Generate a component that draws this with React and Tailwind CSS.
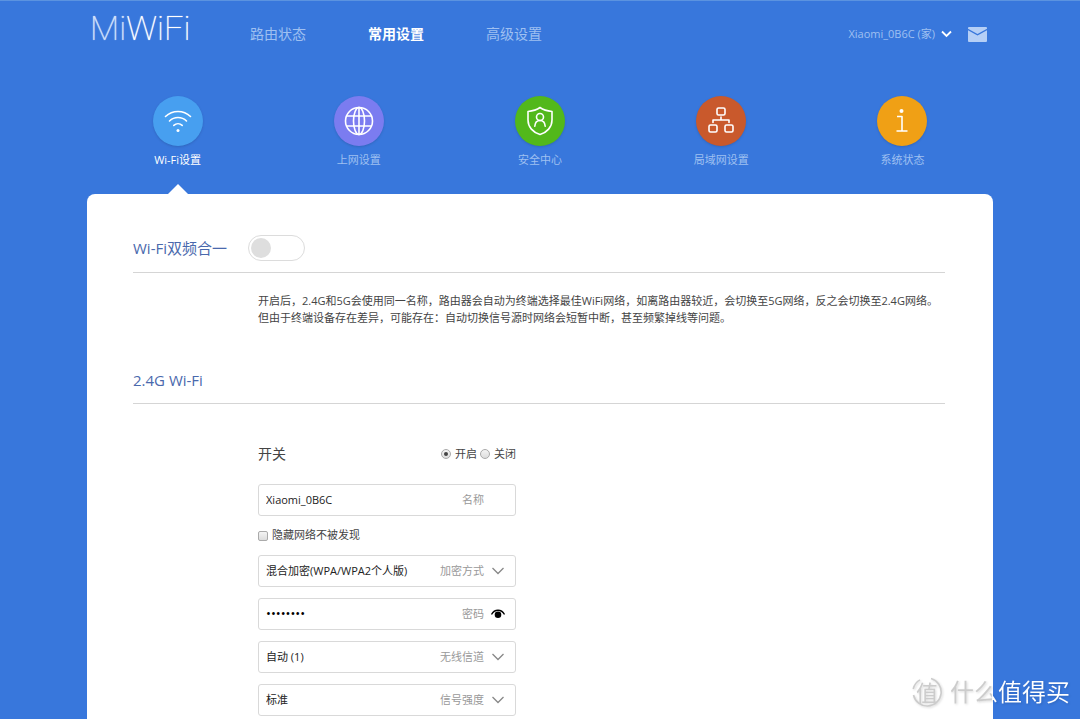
import { useState } from "react";

const TABS = [
  { id: "wifi", name: "Wi-Fi设置", color: "bg-[#479ff0]", Icon: WifiIcon },
  { id: "wan", name: "上网设置", color: "bg-[#7b7cf0]", Icon: GlobeIcon },
  { id: "safe", name: "安全中心", color: "bg-[#52b81b]", Icon: ShieldIcon },
  { id: "lan", name: "局域网设置", color: "bg-[#c9592c]", Icon: LanIcon },
  { id: "sys", name: "系统状态", color: "bg-[#f0a015]", Icon: InfoIcon },
];

function Icon({ children }) {
  return (
    <svg
      width="34"
      height="34"
      viewBox="0 0 34 34"
      fill="none"
      stroke="white"
      strokeWidth="1.6"
      strokeLinecap="round"
      strokeLinejoin="round"
      aria-hidden="true"
    >
      {children}
    </svg>
  );
}

function WifiIcon() {
  return (
    <Icon>
      <path d="M4.5 12.5C11.5 5.9 22.5 5.9 29.5 12.5" />
      <path d="M8.5 17C13.3 12.3 20.7 12.3 25.5 17" />
      <path d="M12.8 21.4C15.2 19.2 18.8 19.2 21.2 21.4" />
      <circle cx="17" cy="26.5" r="1.5" fill="white" stroke="none" />
    </Icon>
  );
}

function GlobeIcon() {
  return (
    <Icon>
      <circle cx="17" cy="17" r="13.5" />
      <ellipse cx="17" cy="17" rx="5.5" ry="13.5" />
      <path d="M17 3.5v27M4.8 12h24.4M4.8 22h24.4" />
    </Icon>
  );
}

function ShieldIcon() {
  return (
    <Icon>
      <path d="M17 3.5C13.5 6 9.5 7 5 7.5V16c0 7 5 12.5 12 14.5 7-2 12-7.5 12-14.5V7.5C24.5 7 20.5 6 17 3.5z" />
      <circle cx="17" cy="13" r="3.5" />
      <path d="M11.8 22.2c.3-3.8 2.200-5.700 5.200-5.700s4.900 1.900 5.200 5.700" />
    </Icon>
  );
}

function LanIcon() {
  return (
    <Icon>
      <rect x="13" y="4" width="8" height="7" rx="1.5" />
      <rect x="5" y="21" width="8" height="7" rx="1.5" />
      <rect x="21" y="21" width="8" height="7" rx="1.5" />
      <path d="M17 13v3M9 18.500V16h16v2.500" />
    </Icon>
  );
}

function InfoIcon() {
  return (
    <Icon>
      <circle cx="16.5" cy="7" r="2" fill="white" stroke="none" />
      <path d="M12 12.5h5V27M11.500 27h11" strokeLinecap="butt" />
    </Icon>
  );
}

function Chevron() {
  return (
    <svg width="14" height="8" viewBox="0 0 14 8" fill="none" stroke="#888" aria-hidden="true">
      <path d="M1.5 1L7 6.500 12.500 1" strokeWidth="1.3" />
    </svg>
  );
}

function Field({ label, icon, children }) {
  return (
    <label className="flex h-8 items-center gap-[7px] rounded-[3px] border border-[#d9d9d9] pr-2.5 pl-[7px]">
      {children}
      <span className="shrink-0 text-[11px] text-[#999]">{label}</span>
      <span className="flex w-3.5 shrink-0 justify-center">{icon}</span>
    </label>
  );
}

function SelectField({ label, options }) {
  return (
    <Field label={label} icon={<Chevron />}>
      <select className="min-w-0 flex-1 appearance-none bg-transparent text-[11px] text-[#222] outline-none">
        {options.map((o) => (
          <option key={o}>{o}</option>
        ))}
      </select>
    </Field>
  );
}

function Radio({ label, checked, onChange }) {
  return (
    <label className="flex items-center gap-1">
      <input
        type="radio"
        name="switch24"
        checked={checked}
        onChange={onChange}
        className="flex size-2.5 appearance-none items-center justify-center rounded-full border border-[#aaa] bg-linear-to-b from-[#f4f4f4] to-[#ddd] checked:before:size-1 checked:before:rounded-full checked:before:bg-[#444]"
      />
      {label}
    </label>
  );
}

export default function App() {
  const [tab, setTab] = useState("wifi");
  const [merged, setMerged] = useState(false);
  const [on, setOn] = useState(true);
  const [hidden, setHidden] = useState(false);
  const [showPwd, setShowPwd] = useState(false);

  return (
    <div className="relative flex min-h-screen flex-col border-t border-[#5b93e0] bg-[#3877dc] font-['Open_Sans','Noto_Sans_CJK_SC',sans-serif] text-[11px]">
      <div className="mx-auto flex w-full max-w-[906px] flex-1 flex-col">
        <header className="flex h-[66px] items-center pr-1.5 pl-[3px] text-[#9fc0f1]">
          <a
            href="#"
            className="mb-3 w-[98px] shrink-0 font-['Roboto',sans-serif] text-[34px] leading-10 font-thin whitespace-nowrap text-white text-shadow-[0_0_1px_#fff]"
          >
            <span className="text-[#cfe0fa]">Mi</span>WiFi
          </a>
          <nav className="ml-[62px] flex gap-[62px] text-sm">
            <a href="#">路由状态</a>
            <a href="#" className="font-bold text-white">
              常用设置
            </a>
            <a href="#">高级设置</a>
          </nav>
          <button className="ml-auto flex items-center gap-1.5">
            Xiaomi_0B6C (家)
            <svg width="11" height="8" viewBox="0 0 11 8" fill="none" stroke="white" aria-hidden="true">
              <path d="M1 1.500l4.500 4.500L10 1.500" strokeWidth="1.800" />
            </svg>
          </button>
          <button aria-label="消息" className="ml-4">
            <svg width="19" height="15" viewBox="0 0 19 15" fill="#b5cff6" aria-hidden="true">
              <path d="M1 0h17a1 1 0 0 1 1 1v.8L9.500 7 0 1.800V1a1 1 0 0 1 1-1z" />
              <path d="M0 3.300L9.500 8.500 19 3.300V14a1 1 0 0 1-1 1H1a1 1 0 0 1-1-1z" />
            </svg>
          </button>
        </header>

        <nav className="mt-[29px] grid h-[98px] grid-cols-5">
          {TABS.map(({ id, name, color, Icon: TabIcon }) => (
            <button
              key={id}
              onClick={() => setTab(id)}
              className={`flex flex-col items-center ${tab === id ? "text-white" : "text-[#9fc0f1]"}`}
            >
              <span className={`flex size-[50px] items-center justify-center rounded-full shadow-sm ${color}`}>
                <TabIcon />
              </span>
              <span className="mt-1.5 leading-4">{name}</span>
              {tab === id && (
                <svg width="20" height="10" viewBox="0 0 20 10" className="mt-auto" aria-hidden="true">
                  <path d="M0 10L10 0l10 10z" fill="white" />
                </svg>
              )}
            </button>
          ))}
        </nav>

        <main className="flex-1 rounded-t-lg bg-white pt-[41px] pr-12 pb-[3px] pl-[46px] text-[#444]">
          <section>
            <div className="flex items-center border-b border-[#d5d5d5] pb-[11px]">
              <h2 className="w-[115px] text-[15px] text-[#4a69ad]">
                <label htmlFor="merge">Wi-Fi双频合一</label>
              </h2>
              <input
                id="merge"
                type="checkbox"
                role="switch"
                checked={merged}
                onChange={() => setMerged(!merged)}
                className="flex h-[26px] w-[57px] appearance-none items-center rounded-full border border-[#dcdcdc] px-0.5 before:size-5 before:rounded-full before:bg-[#dedede] checked:justify-end checked:before:bg-[#52b81b]"
              />
            </div>
            <p className="mt-[19px] pl-[125px] leading-[17px]">
              开启后，2.4G和5G会使用同一名称，路由器会自动为终端选择最佳WiFi网络，如离路由器较近，会切换至5G网络，反之会切换至2.4G网络。
              <br />
              但由于终端设备存在差异，可能存在：自动切换信号源时网络会短暂中断，甚至频繁掉线等问题。
            </p>
          </section>

          <section className="mt-[42px]">
            <h2 className="border-b border-[#d5d5d5] pb-[11px] text-[15px] leading-6 text-[#4a69ad]">2.4G Wi-Fi</h2>
            <form className="mt-[38px] ml-[125px] w-[258px] max-w-full">
              <div className="mb-[18px] flex h-6 items-center justify-between">
                <span className="text-sm">开关</span>
                <span className="flex gap-[3px]">
                  <Radio label="开启" checked={on} onChange={() => setOn(true)} />
                  <Radio label="关闭" checked={!on} onChange={() => setOn(false)} />
                </span>
              </div>
              <div className="flex flex-col gap-[11px]">
                <Field label="名称">
                  <input defaultValue="Xiaomi_0B6C" className="min-w-0 flex-1 text-[11px] text-[#222] outline-none" />
                </Field>
                <label className="flex h-[17px] items-center gap-1">
                  <input
                    type="checkbox"
                    checked={hidden}
                    onChange={() => setHidden(!hidden)}
                    className="size-2.5 appearance-none rounded-xs border border-[#aaa] bg-linear-to-b from-[#f4f4f4] to-[#ddd] checked:from-[#444] checked:to-[#444]"
                  />
                  隐藏网络不被发现
                </label>
                <SelectField label="加密方式" options={["混合加密(WPA/WPA2个人版)", "强加密(WPA2个人版)", "无加密"]} />
                <Field
                  label="密码"
                  icon={
                    <button type="button" aria-label="显示密码" onClick={() => setShowPwd(!showPwd)}>
                      <svg width="14" height="10" viewBox="0 0 14 10" aria-hidden="true">
                        <path d="M.5 5.500C3.500-.2 10.500-.2 13.500 5.500" fill="none" stroke="black" strokeWidth="1.300" />
                        <circle cx="7" cy="5.800" r="3.300" />
                      </svg>
                    </button>
                  }
                >
                  <input
                    type={showPwd ? "text" : "password"}
                    defaultValue="12345678"
                    className="min-w-0 flex-1 text-[13px] text-black outline-none"
                  />
                </Field>
                <SelectField label="无线信道" options={["自动 (1)", "1", "6", "11"]} />
                <SelectField label="信号强度" options={["标准", "穿墙", "节能"]} />
              </div>
            </form>
          </section>
        </main>
      </div>

      <div className="pointer-events-none absolute right-2.5 bottom-3 flex items-center gap-2 drop-shadow-[1px_1px_1px_rgba(0,0,0,0.15)]">
        <span className="grid size-[30px] place-items-center text-[22px] leading-none text-[#ccc]">
          <svg
            width="30"
            height="30"
            viewBox="0 0 30 30"
            fill="none"
            stroke="#ccc"
            strokeWidth="1.6"
            className="col-start-1 row-start-1"
            aria-hidden="true"
          >
            <path d="M19 1.600A14 14 0 1 1 1.500 18M1.200 12A14 14 0 0 1 8 2.900" />
          </svg>
          <span className="col-start-1 row-start-1">值</span>
        </span>
        <span className="bg-linear-to-r from-[#ccc] from-[42px] to-white to-[42px] bg-clip-text text-2xl leading-[30px] text-transparent">
          什么值得买
        </span>
      </div>
    </div>
  );
}
